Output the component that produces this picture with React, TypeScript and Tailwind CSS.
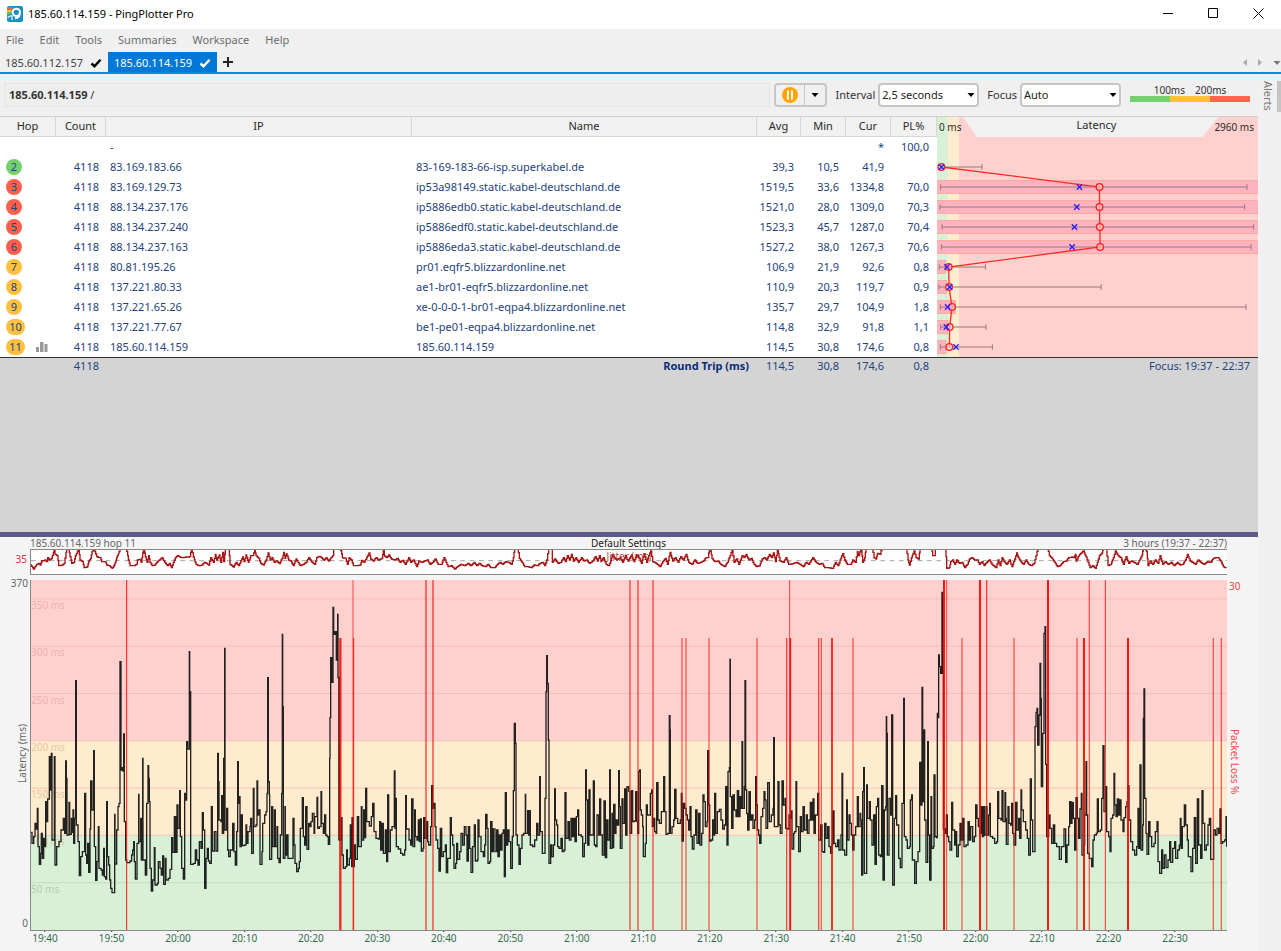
import { ReactNode } from 'react';

interface Hop {
  hop?: number;
  level?: 'good' | 'warn' | 'bad';
  count?: string;
  ip: string;
  name?: string;
  avg?: string;
  min?: string;
  cur: string;
  loss?: string;
}

const HOPS: Hop[] = [
  { ip: '-', cur: '*', loss: '100,0' },
  { hop: 2, level: 'good', count: '4118', ip: '83.169.183.66', name: '83-169-183-66-isp.superkabel.de', avg: '39,3', min: '10,5', cur: '41,9' },
  { hop: 3, level: 'bad', count: '4118', ip: '83.169.129.73', name: 'ip53a98149.static.kabel-deutschland.de', avg: '1519,5', min: '33,6', cur: '1334,8', loss: '70,0' },
  { hop: 4, level: 'bad', count: '4118', ip: '88.134.237.176', name: 'ip5886edb0.static.kabel-deutschland.de', avg: '1521,0', min: '28,0', cur: '1309,0', loss: '70,3' },
  { hop: 5, level: 'bad', count: '4118', ip: '88.134.237.240', name: 'ip5886edf0.static.kabel-deutschland.de', avg: '1523,3', min: '45,7', cur: '1287,0', loss: '70,4' },
  { hop: 6, level: 'bad', count: '4118', ip: '88.134.237.163', name: 'ip5886eda3.static.kabel-deutschland.de', avg: '1527,2', min: '38,0', cur: '1267,3', loss: '70,6' },
  { hop: 7, level: 'warn', count: '4118', ip: '80.81.195.26', name: 'pr01.eqfr5.blizzardonline.net', avg: '106,9', min: '21,9', cur: '92,6', loss: '0,8' },
  { hop: 8, level: 'warn', count: '4118', ip: '137.221.80.33', name: 'ae1-br01-eqfr5.blizzardonline.net', avg: '110,9', min: '20,3', cur: '119,7', loss: '0,9' },
  { hop: 9, level: 'warn', count: '4118', ip: '137.221.65.26', name: 'xe-0-0-0-1-br01-eqpa4.blizzardonline.net', avg: '135,7', min: '29,7', cur: '104,9', loss: '1,8' },
  { hop: 10, level: 'warn', count: '4118', ip: '137.221.77.67', name: 'be1-pe01-eqpa4.blizzardonline.net', avg: '114,8', min: '32,9', cur: '91,8', loss: '1,1' },
  { hop: 11, level: 'warn', count: '4118', ip: '185.60.114.159', name: '185.60.114.159', avg: '114,5', min: '30,8', cur: '174,6', loss: '0,8' },
];

const levelColor = {
  good: 'bg-[#74cf6e]',
  warn: 'bg-[#ffc040]',
  bad: 'bg-[#ff5f4c]',
};

// min, max, average, current and loss bar end, one entry per hop
const HOP_MARKS = [
  { min: 34, max: 156, avg: 34, cur: 34, loss: 0 },
  { min: 32, max: 950, avg: 508, cur: 448, loss: 990 },
  { min: 30, max: 943, avg: 508, cur: 440, loss: 990 },
  { min: 36, max: 970, avg: 509, cur: 433, loss: 990 },
  { min: 34, max: 962, avg: 510, cur: 426, loss: 990 },
  { min: 28, max: 166, avg: 56, cur: 51, loss: 46 },
  { min: 27, max: 513, avg: 57, cur: 59, loss: 49 },
  { min: 31, max: 947, avg: 66, cur: 53, loss: 77 },
  { min: 32, max: 168, avg: 59, cur: 49, loss: 53 },
  { min: 31, max: 187, avg: 58, cur: 78, loss: 48 },
];

// Samples are "x y" pairs in thirds of a pixel; each part is moved by its own offset
const LATENCY = [
  {
    offset: 0,
    data: '93 922,96 955,101 935,105 895,108 912,112 850,114 965,118 1018,122 985,124 925,127 1000,131 940,134 965,137 830,140 890,143 822,148 695,151 795,154 685,156 945,163 695,165 1020,170 965,177 950,183 915,190 880,194 925,197 708,199 760,201 930,207 832,209 928,214 880,216 922,219 855,221 955,224 880,227 467,229 900,234 950,238 1052,242 995,247 980,254 805,257 990,260 1015,263 955,266 1042,270 912,272 768,276 855,281 677,283 965,287 1066,291 1010,295 905,297 1030,303 1035,307 1050,311 970,313 1055,317 1062,320 830,322 995,326 1020,329 1065,332 1090,336 1103,341 1103,344 868,345 1017,350 915,354 845,357 835,360 410,363 735,366 728,369 738,371 627,373 890,377 1005,380 1013,390 1008,395 990,398 975,401 950,403 1010,406 1062,411 955,416 808,417 950,422 880,424 1005,428 700,429 1005,436 1050,440 835,444 722,446 760,448 830,450 1030,454 1098,458 1065,463 968,465 1080,472 1075,475 1010,480 1030,484 1050,488 993,491 1078,496 1000,498 1065,505 1060,510 1033,515 938,518 982,523 875,527 982,531 840,534 910,539 797,541 935,545 1030,550 1062,554 805,557 825,560 650,563 672,568 380,569 520,571 500,572 1018,580 1015,586 975,590 1005,594 1020,598 950,603 970,607 863,610 915,614 1090,618 1000,622 970,625 1008,629 1015,634 845,637 978,643 920,648 978,653 685,655 770,657 885,663 890,665 812,667 925,671 700,674 370,675 915,680 850,683 975,686 995,691 975,698 895,702 980,706 1020,710 920,713 710,715 835,718 815,720 965,724 870,727 962,733 960,738 900,740 955,744 920,750 905,752 880,755 985,760 790,762 905,768 900,771 768,773 870,777 855,780 1018,786 980,788 895,794 870,798 860,801 805,803 458,805 770,808 810,809 1003,815 845,818 965,823 855,826 965,831 905,833 1000,837 1013,841 930,845 805,847 328,848 545,850 1000,855 845,856 990,860 930,864 1000,872 1000,879 880,882 960,885 1015,890 1040,895 1030,898 1010,901 910,907 818,910 935,914 960,917 845,921 973,926 895,930 905,933 890,937 865,942 925,944 875,951 817,953 910,958 905,963 800,965 895,970 925,974 870,977 930,981 935,985 958,989 700,990 578,992 398,996 472,999 247,1001 328,1005 320,1009 405,1013 268,1014 458,1018 945',
  },
  {
    offset: 960,
    data: '55 458,57 945,63 878,66 990,70 1030,76 1025,80 975,82 1020,88 1000,91 900,95 1025,96 878,99 1025,103 960,106 1003,112 875,116 965,124 845,126 945,131 855,135 938,137 790,140 890,148 903,154 875,158 835,162 920,168 940,175 942,179 890,182 975,186 895,190 985,196 915,200 1010,203 810,206 980,211 915,216 905,223 738,225 910,227 820,229 965,235 972,242 985,248 990,254 975,257 812,259 912,267 945,272 960,275 822,279 965,284 855,286 935,291 945,295 885,298 950,301 882,304 978,309 970,311 878,315 940,320 890,323 950,326 960,332 905,335 782,338 850,342 835,345 905,348 945,353 970,357 1038,361 910,365 995,370 980,376 960,379 1043,383 1000,391 878,394 930,398 960,402 1030,407 1015,410 955,413 1003,419 980,423 925,428 960,433 905,438 930,441 1008,445 905,449 970,453 1042,458 965,463 900,466 1008,472 1005,474 885,477 935,483 980,490 995,494 960,497 868,501 910,504 1015,509 1010,512 890,516 980,520 912,525 980,530 915,534 995,538 930,542 975,546 925,550 915,553 1055,556 803,559 960,563 915,567 950,572 1030,577 935,580 797,583 595,586 655,588 930,592 960,597 1018,601 970,606 930,611 925,616 808,617 925,623 857,626 930,629 857,631 960,638 965,644 945,650 895,654 930,659 755,661 920,667 985,672 985,675 820,678 500,680 392,682 475,685 645,687 1015,692 960,695 995,700 960,704 792,706 885,710 900,713 965,717 970,723 940,727 980,732 975,735 803,738 940,744 890,748 945,753 880,757 935,761 880,765 950,769 875,773 855,776 930,784 935,788 995,793 955,797 735,799 825,803 960,807 795,810 930,816 930,820 768,823 960,827 965,831 870,836 930,839 822,842 930,847 990,852 828,856 998,860 885,864 945,869 735,871 970,876 865,878 968,881 838,885 925,888 885,892 900,896 737,898 845,901 970,906 822,909 895,914 792,917 930,921 785,926 800',
  },
  {
    offset: 1860,
    data: '26 800,27 800,30 925,35 797,38 890,43 888,47 800,51 890,53 925,56 740,59 735,61 855,64 870,68 905,70 995,76 955,79 840,82 870,88 870,91 805,95 795,97 905,101 880,104 920,108 925,110 773,114 885,118 895,124 860,131 755,134 860,138 928,143 925,146 925,148 572,150 615,151 925,156 905,161 885,164 793,168 880,173 895,181 885,184 805,186 948,190 835,194 850,198 870,202 885,206 915,210 845,213 935,217 972,222 930,227 855,231 955,236 865,240 960,245 925,249 810,252 830,256 905,261 890,263 677,266 840,269 948,273 945,278 885,281 930,284 805,287 925,292 860,298 853,303 885,308 912,313 900,317 785,321 960,324 740,328 728,330 403,331 815,335 910,339 810,343 855,348 875,352 797,356 875,360 815,363 850,366 650,368 850,373 785,375 467,377 795,380 865,383 915,387 800,391 885,395 870,399 910,404 885,407 755,409 840,412 915,416 930,419 955,423 875,428 850,432 800,435 825,438 910,443 773,448 890,454 870,459 850,461 638,463 905,470 905,474 770,477 900,481 925,486 768,490 840,495 820,497 910,503 912,507 870,511 880,514 858,516 972,521 925,524 920,528 770,530 905,536 980,541 875,544 920,549 845,553 915,559 870,562 925,567 885,571 832,575 885,579 822,582 925,586 870,593 805,596 945,602 900,606 980,611 982,614 895,618 940,623 905,627 965,632 985,636 960,638 858,642 955,647 965,653 945,657 975,663 930,666 745,668 975,674 990,680 825,682 945,687 870,690 895,694 930,698 975,702 930,707 905,712 815,715 905,720 865,722 885,725 1050,728 800,731 728,733 1045,740 780,742 880,748 830,751 885,756 960,761 870,765 1018,769 845,773 820,776 990,781 995,785 782,789 1065,793 855,797 845,799 575,800 625,802 990,807 820,812 870,815 570,818 1080,823 880,827 812,830 900,836 1000,841 1028,846 835,851 520,853 935,858 945,862 970,868 965,871 825,875 810,877 1005,884 1075,889 1010,894 980,899 712,902 840,906 487,908 830,911 615,914 885,918 1012,923 650,925 930,929 1065,933 815,935 970,940 965,942 750,945 935,950 935',
  },
  {
    offset: 2760,
    data: '45 935,50 938,52 565,54 578,56 390,58 425,62 445,66 202,68 440,70 912,76 925,79 870,82 935,86 950,90 975,95 832,98 915,104 960,107 920,110 995,115 960,120 895,124 945,128 880,132 965,138 960,144 890,148 945,152 905,158 950,163 935,167 840,171 880,175 905,180 925,184 845,187 935,191 845,193 930,198 845,201 930,206 870,209 835,211 935,218 940,224 955,230 950,233 800,236 880,243 885,246 797,249 890,255 803,257 880,259 958,264 845,267 895,272 900,275 835,278 925,282 960,287 832,291 915,296 880,299 940,303 795,305 855,310 890,317 915,322 940,326 990,331 762,334 885,338 980,343 980,345 605,348 562,351 550,353 660,357 570,360 415,362 520,364 785,368 625,372 325,375 305,377 718,380 935,386 870,390 910,395 955,400 900,404 955,410 965,418 1003,424 965,432 912,437 1012,441 960,446 905,449 830,453 895,456 832,460 880,464 975,468 818,472 880,476 940,480 852,484 805,486 990,491 960,494 870,498 710,500 870,503 985,508 1000,515 1025,519 945,523 930,529 925,532 822,535 920,541 915,545 820,549 662,552 860,557 785,560 920,566 935,570 980,573 880,578 870,582 745,584 840,588 875,592 822,596 870,600 825,603 885,609 920,612 878,617 845,621 830,624 782,627 885,632 950,638 975,644 990,650 965,654 850,656 970,660 720,663 975,668 900,670 580,672 492,674 820,678 925,681 988,686 890,690 935,695 965,702 955,706 920,711 890,714 1010,719 1045,725 975,728 1030,733 990,738 1028,744 1005,749 950,752 1012,758 970,764 950,767 1000,773 975,778 960,781 880,783 970,787 905,793 840,797 900,802 945,805 995,813 1040,818 970,823 878,827 1015,832 822,836 960,842 1000,846 797,849 895,854 975,859 960,864 900,868 880,872 1003,877 1003,881 915,886 930,891 910,896 925,900 852,903 955,908 950,914 945,918 875,920 965',
  },
];

const JITTER = [
  {
    offset: 0,
    data: '93 120,100 132,110 118,118 115,120 120,125 108,135 105,140 110,143 98,148 105,155 100,162 75,165 88,172 92,176 122,186 120,192 115,198 82,200 70,205 70,210 95,215 115,222 112,226 92,232 80,236 72,240 105,248 110,252 128,262 125,266 108,272 100,276 80,282 72,290 95,300 98,305 110,315 110,320 120,328 122,336 130,343 120,350 98,357 80,360 66,378 66,385 105,390 122,402 122,410 118,412 105,420 103,424 112,428 84,432 72,436 96,441 112,446 92,450 112,456 122,464 120,470 112,478 105,486 98,494 112,502 122,508 115,514 128,520 112,526 98,532 92,545 98,560 96,570 95,574 70,580 96,588 118,596 122,606 120,612 112,620 115,626 120,632 98,640 112,646 88,650 105,658 90,662 112,668 82,671 110,676 66,686 66,690 118,700 126,708 112,716 122,722 108,728 96,732 110,738 90,745 112,752 92,758 92,764 76,768 92,776 100,782 115,790 120,798 105,804 84,810 105,816 98,822 112,830 108,838 116,846 100,851 82,855 100,859 86,866 105,872 108,880 122,888 102,894 112,900 122,910 118,918 112,926 98,936 112,944 118,950 98,958 94,964 98,972 105,978 98,986 108,993 98,998 92,1001 66,1020 66,1027 98,1036 100',
  },
  {
    offset: 960,
    data: '76 100,82 118,87 98,94 105,100 122,112 122,120 120,125 106,132 112,140 98,147 84,152 102,160 108,168 98,176 105,185 100,190 76,193 92,200 98,206 90,214 102,222 105,232 100,240 112,248 106,256 118,266 98,272 112,280 105,290 125,296 108,305 112,314 108,322 105,330 118,338 112,346 102,354 118,364 118,372 98,378 112,384 125,394 122,404 132,412 125,422 118,434 122,444 115,452 122,462 112,470 122,478 115,486 122,496 125,504 118,512 128,524 128,532 118,540 112,548 118,556 110,566 112,574 118,580 98,584 66,592 66,598 100,606 112,614 125,624 125,634 128,642 120,652 122,660 115,668 112,674 122,680 105,686 66,694 66,697 112,704 102,714 115,722 112,730 98,736 110,742 92,748 105,754 88,760 108,768 98,775 112,784 98,792 108,800 105,808 115,818 108,826 95,832 108,838 92,843 110,850 98,858 118,866 122,872 108,876 90,890 105,900 98',
  },
  {
    offset: 1860,
    data: '0 98,8 112,16 92,24 108,34 90,42 110,50 90,58 100,64 115,72 86,80 112,86 92,92 78,98 110,104 112,112 118,120 125,128 110,136 100,142 118,150 82,158 108,166 98,174 112,182 95,190 105,198 88,206 112,216 118,224 105,232 115,242 112,250 108,258 98,264 98,268 70,272 78,276 100,284 110,294 108,302 118,314 125,322 112,330 92,336 74,342 112,350 102,356 118,366 92,372 98,378 88,386 105,394 100,402 118,410 125,418 122,426 102,434 98,440 105,448 88,454 98,460 84,466 110,472 74,480 108,490 112,498 98,506 118,518 116,530 112,540 118,550 125,558 112,566 118,578 98,588 112,598 118,606 115,614 128,626 128,638 130,646 112,654 122,660 105,668 86,674 105,682 118,692 118,698 105,706 112,712 80,716 92,722 70,724 74,728 112,734 98,738 66,756 66,762 98,768 102,772 85,780 88,786 66,858 66,864 105,868 120,874 98,882 78,888 98,896 102,900 66,933 66,938 92,944 92,946 60',
  },
  {
    offset: 2760,
    data: '46 60,76 60,80 130,88 128,92 110,98 105,104 118,110 105,118 115,126 112,134 128,142 118,148 102,156 98,164 105,172 105,178 118,186 110,192 122,200 112,208 105,216 118,228 128,234 105,240 122,246 98,252 110,260 118,268 105,276 125,284 102,290 84,294 96,302 110,310 118,318 105,326 118,334 122,342 115,348 92,354 66,382 66,388 92,396 100,404 112,412 125,420 122,430 110,438 108,446 98,456 96,462 98,466 88,468 108,474 95,482 85,490 78,498 96,504 112,510 128,518 122,526 130,532 112,538 92,546 84,550 66,558 66,564 122,572 118,580 98,586 78,594 92,602 98,610 118,618 95,626 115,634 108,642 112,652 118,660 102,666 90,670 66,680 80,684 122,690 108,698 118,706 105,714 115,720 92,728 118,736 110,744 118,754 112,762 122,772 112,780 120,788 118,796 105,802 88,810 108,818 112,826 118,834 105,842 112,852 118,862 110,872 112,880 100,888 98,894 98,902 108,910 125,918 130',
  },
];

// [x, top, width, opacity]
const LOSS_LINES: [number, number, number, number][] = [
  [380, 165, 3, 0.9],
  [1021, 339, 7, 0.85],
  [1059, 165, 4, 0.5],
  [1061, 339, 3, 0.9],
  [1278, 165, 5, 0.6],
  [1299, 165, 5, 0.6],
  [1890, 165, 4, 0.7],
  [1914, 165, 4, 0.7],
  [1959, 165, 4, 0.7],
  [2046, 339, 4, 0.6],
  [2058, 339, 4, 0.6],
  [2127, 339, 4, 0.6],
  [2271, 339, 4, 0.6],
  [2360, 339, 4, 0.7],
  [2369, 165, 3, 0.7],
  [2371, 339, 5, 0.9],
  [2456, 339, 4, 0.7],
  [2464, 339, 4, 0.6],
  [2496, 339, 5, 0.95],
  [2559, 339, 4, 0.6],
  [2832, 165, 6, 0.9],
  [2840, 165, 3, 0.7],
  [2886, 339, 4, 0.6],
  [2940, 165, 6, 0.9],
  [2960, 165, 4, 0.7],
  [3042, 339, 4, 0.6],
  [3144, 165, 6, 0.9],
  [3231, 339, 4, 0.6],
  [3252, 339, 6, 0.9],
  [3268, 165, 4, 0.6],
  [3316, 165, 3, 0.8],
  [3384, 339, 6, 0.9],
  [3640, 339, 4, 0.6],
  [3664, 339, 4, 0.6],
];

const TIMES = ['19:40', '19:50', '20:00', '20:10', '20:20', '20:30', '20:40', '20:50', '21:00', '21:10', '21:20', '21:30', '21:40', '21:50', '22:00', '22:10', '22:20', '22:30'];
const GRID = [350, 300, 250, 200, 150, 100, 50];
const MENU = ['File', 'Edit', 'Tools', 'Summaries', 'Workspace', 'Help'];

function parsePoints(part: { offset: number; data: string }) {
  return part.data.split(',').map((pair) => {
    const [x, y] = pair.split(' ').map(Number);
    return [x + part.offset, y];
  });
}

function stepPath(points: number[][]) {
  return points.map(([x, y], i) => (i === 0 ? `M${x} ${y}` : `H${x}V${y}`)).join('');
}

// Breaks long slopes into one-pixel steps
function fineSteps(points: number[][]) {
  return points.flatMap(([x, y], i) => {
    if (i === 0) return [[x, y]];
    const [px, py] = points[i - 1];
    const n = Math.ceil((x - px) / 3);
    return Array.from({ length: n }, (_, k) => [
      Math.round(px + ((x - px) * (k + 1)) / n),
      Math.round(py + ((y - py) * (k + 1)) / n),
    ]);
  });
}

function Logo() {
  return (
    <svg className="h-4 w-4" viewBox="0 0 48 48">
      <rect width="48" height="48" rx="6" fill="#1590c4" />
      <path d="M0 8Q2 3 9 4H19L15 12H0Z" fill="#f0653a" />
      <path d="M0 12H14V19H0Z" fill="#f7c325" />
      <path d="M0 19H13V25Q5 24 0 29Z" fill="#62bd5c" />
      <circle cx="28" cy="19" r="11" fill="#1590c4" stroke="#fff" strokeWidth="6" />
      <path d="M38 22Q39 36 24 37" fill="none" stroke="#fff" strokeWidth="6" />
      <path d="M2 36Q7 28 15 30V43" fill="none" stroke="#d8eef8" strokeWidth="4" />
    </svg>
  );
}

function Check() {
  return (
    <svg className="h-3 w-3" viewBox="0 0 12 12" fill="none" stroke="currentColor" strokeWidth="2.4">
      <path d="M1.5 6.5L4.5 9.2L10.5 2.8" />
    </svg>
  );
}

function Caret() {
  return (
    <svg className="h-1 w-2" viewBox="0 0 8 4" fill="currentColor">
      <path d="M0.500 0H7.500L4 4Z" />
    </svg>
  );
}

function TitleBar() {
  return (
    <header className="flex h-[29px] items-center bg-white pb-[2px] pl-[7px]">
      <Logo />
      <h1 className="ml-[5px] flex-1 text-[11px] leading-4 text-black">185.60.114.159 - PingPlotter Pro</h1>
      <button aria-label="Minimize" className="flex h-full w-[46px] items-center justify-center">
        <svg className="h-[11px] w-[11px]" viewBox="0 0 11 11" stroke="#000" fill="none"><path d="M0 5.5H10" /></svg>
      </button>
      <button aria-label="Maximize" className="flex h-full w-[45px] items-center justify-center">
        <svg className="h-[11px] w-[11px]" viewBox="0 0 11 11" stroke="#000" fill="none"><path d="M.5 .5H9.5V9.5H.5Z" /></svg>
      </button>
      <button aria-label="Close" className="flex h-full w-[45px] items-center justify-center">
        <svg className="h-[11px] w-[11px]" viewBox="0 0 11 11" stroke="#000" fill="none"><path d="M.5 .5L10.5 10.5M10.5 .5L.5 10.5" /></svg>
      </button>
    </header>
  );
}

function Tabs() {
  return (
    <div className="flex h-[22px] items-stretch border-b-2 border-[#0a8bdc] text-[11px] text-[#444]">
      <button className="flex w-[108px] items-center gap-[7px] pt-[2px] pl-[5px]">
        185.60.112.157
        <span className="text-black"><Check /></span>
      </button>
      <button className="flex w-[109px] items-center gap-[7px] bg-[#0078d7] pt-[2px] pl-[6px] text-white">
        185.60.114.159
        <Check />
      </button>
      <button aria-label="New tab" className="flex w-[22px] items-center justify-center">
        <svg className="h-[10px] w-[10px]" viewBox="0 0 10 10" stroke="#222" strokeWidth="2"><path d="M0 5H10M5 0V10" /></svg>
      </button>
      <div className="ml-auto flex items-center gap-[11px] text-[#aaa]">
        <svg className="h-[7px] w-1" viewBox="0 0 4 7" fill="currentColor"><path d="M4 0V7L0 3.5Z" /></svg>
        <svg className="h-[7px] w-1" viewBox="0 0 4 7" fill="currentColor"><path d="M0 0V7L4 3.5Z" /></svg>
        <span className="pt-[2px] text-[#777]"><Caret /></span>
      </div>
    </div>
  );
}

function Picker({ id, label, value }: { id: string; label: string; value: string }) {
  return (
    <div className="flex items-center gap-[3px]">
      <label htmlFor={id}>{label}</label>
      <div className="relative">
        <select id={id} defaultValue={value} className="h-6 w-[101px] appearance-none rounded-sm border-2 border-[#c6c6c6] bg-white pl-[2px] text-[11px] text-[#222]">
          <option>{value}</option>
        </select>
        <span className="pointer-events-none absolute top-[10px] right-1 text-black"><Caret /></span>
      </div>
    </div>
  );
}

function Toolbar() {
  return (
    <div className="flex h-[42px] items-center pr-2 pl-1 text-[11px] text-[#333]">
      <div className="flex h-6 flex-1 items-center border border-[#e4e4e4] bg-[#eeeeee] pl-1 leading-4">
        <b>185.60.114.159</b>&nbsp;/
      </div>
      <div className="ml-1 flex h-6 w-[53px] rounded-sm border-2 border-[#c6c6c6]">
        <button aria-label="Pause" className="flex flex-1 items-center justify-center border-r border-[#c6c6c6]">
          <svg className="h-4 w-4" viewBox="0 0 16 16">
            <circle cx="8" cy="8" r="8" fill="#ffa500" />
            <path d="M6 4V12M10 4V12" stroke="#fff" strokeWidth="1.8" strokeLinecap="round" />
          </svg>
        </button>
        <button aria-label="Pause options" className="flex w-5 items-center justify-center text-black"><Caret /></button>
      </div>
      <div className="ml-2 flex gap-2">
        <Picker id="interval" label="Interval" value="2,5 seconds" />
        <Picker id="focus" label="Focus" value="Auto" />
      </div>
      <div className="mb-1 ml-[9px] w-[120px] text-[10px] leading-3">
        <div className="flex justify-center gap-[10px]">
          <span>100ms</span>
          <span>200ms</span>
        </div>
        <div className="flex h-[6px]">
          <div className="flex-1 bg-[#74cf6e]" />
          <div className="flex-1 bg-[#ffc040]" />
          <div className="flex-1 bg-[#ff6650]" />
        </div>
      </div>
    </div>
  );
}

function HopGraph() {
  const rowY = (i: number) => 171 + 60 * i;
  return (
    <svg className="block h-[220px] w-full" viewBox="21 81 962 660" preserveAspectRatio="none" fill="none">
      <rect x="21" y="81" width="962" height="660" fill="#ffd1ce" />
      <rect x="21" y="81" width="32" height="660" fill="#d8f0d6" />
      <rect x="53" y="81" width="34" height="660" fill="#ffebcd" />
      {HOP_MARKS.map((m, i) => (
        <g key={i}>
          {m.loss > 0 && <rect x="15" y={rowY(i) - 20} width={m.loss - 15} height="40" fill="#ffb3c0" stroke="#ff9f84" strokeWidth="2" />}
          <path d={`M${m.min} ${rowY(i)}H${m.max}M${m.min} ${rowY(i) - 8}v16M${m.max} ${rowY(i) - 8}v16`} stroke="#967a7a" strokeWidth="3" />
        </g>
      ))}
      <polyline points={HOP_MARKS.map((m, i) => `${m.avg},${rowY(i)}`).join(' ')} stroke="#ff2a2a" strokeWidth="4" />
      {HOP_MARKS.map((m, i) => (
        <g key={i} strokeWidth="4">
          <circle cx={m.avg} cy={rowY(i)} r="10" stroke="#ff2020" fill="#ffc8c8" fillOpacity=".7" />
          <path d={`M${m.cur - 8} ${rowY(i) - 8}l16 16m0 -16l-16 16`} stroke="#2a1cff" />
        </g>
      ))}
    </svg>
  );
}

function HeadCell({ children }: { children: ReactNode }) {
  return <th className="h-5 border-r border-b border-[#d6d6d6] bg-[#f1f1f1] p-0 pb-[2px] text-center font-normal">{children}</th>;
}

function HopTable() {
  return (
    <table className="w-full table-fixed border-separate border-spacing-0 border-t border-[#d0d0d0] text-[11px] leading-4 text-[#24427c]">
      <colgroup>
        <col className="w-[56px]" />
        <col className="w-[50px]" />
        <col className="w-[306px]" />
        <col />
        <col className="w-[44px]" />
        <col className="w-[45px]" />
        <col className="w-[45px]" />
        <col className="w-[46px]" />
        <col className="w-[321px]" />
      </colgroup>
      <thead className="text-[#2a2a2a]">
        <tr>
          <HeadCell>Hop</HeadCell>
          <HeadCell>Count</HeadCell>
          <HeadCell>IP</HeadCell>
          <HeadCell>Name</HeadCell>
          <HeadCell>Avg</HeadCell>
          <HeadCell>Min</HeadCell>
          <HeadCell>Cur</HeadCell>
          <HeadCell>PL%</HeadCell>
          <th className="relative p-0 font-normal">
            <svg className="absolute inset-0 h-full w-full" viewBox="0 0 960 60" preserveAspectRatio="none">
              <rect width="960" height="60" fill="#ffd1ce" />
              <rect width="32" height="60" fill="#d8f0d6" />
              <rect x="32" width="34" height="60" fill="#ffebcd" />
              <path d="M78 0H842L794 60H119Z" fill="#f1f1f1" />
            </svg>
            <div className="relative flex items-start justify-between pr-1 pb-[2px] pl-[2px]">
              <span className="w-12 pt-[2px] text-left text-[10px]">0 ms</span>
              <span>Latency</span>
              <span className="flex w-12 justify-end pt-[2px] text-[10px] whitespace-nowrap">2960 ms</span>
            </div>
          </th>
        </tr>
      </thead>
      <tbody className="bg-white">
        {HOPS.map((h, i) => (
          <tr key={i} className="h-5">
            <td className="p-0 pl-[6px]">
              {h.hop && h.level && (
                <div className="flex items-center gap-[11px]">
                  <span className={`rounded-full text-center ${h.hop > 9 ? 'w-[19px]' : 'w-4'} ${levelColor[h.level]}`}>{h.hop}</span>
                  {h.hop === 11 && (
                    <svg className="h-3 w-3" viewBox="0 0 12 12" fill="#999"><path d="M0 6H3V11H0ZM4 1H7.500V11H4ZM8.500 3H11.500V11H8.500Z" /></svg>
                  )}
                </div>
              )}
            </td>
            <td className="p-0 pr-[7px] text-right">{h.count}</td>
            <td className="p-0 pl-1">{h.ip}</td>
            <td className="p-0 pl-1">{h.name}</td>
            <td className="p-0 pr-[7px] text-right">{h.avg}</td>
            <td className="p-0 pr-[7px] text-right">{h.min}</td>
            <td className="p-0 pr-[7px] text-right">{h.cur}</td>
            <td className="p-0 pr-2 text-right">{h.loss}</td>
            {i === 0 && (
              <td rowSpan={HOPS.length} className="p-0">
                <HopGraph />
              </td>
            )}
          </tr>
        ))}
      </tbody>
      <tfoot>
        <tr className="bg-[#d4d4d4] [&>td]:border-t [&>td]:border-[#333]">
          <td />
          <td className="p-0 pr-[7px] text-right">4118</td>
          <td />
          <td className="p-0 pr-2 text-right font-bold text-[#0c2d74]">Round Trip (ms)</td>
          <td className="p-0 pr-[7px] text-right">114,5</td>
          <td className="p-0 pr-[7px] text-right">30,8</td>
          <td className="p-0 pr-[7px] text-right">174,6</td>
          <td className="p-0 pr-2 text-right">0,8</td>
          <td className="p-0 pr-2 text-right">Focus: 19:37 - 22:37</td>
        </tr>
      </tfoot>
    </table>
  );
}

function JitterPlot() {
  return (
    <div className="relative h-[26px] border-y border-l border-[#888] bg-[#fdfdfd]">
      <svg className="block h-full w-full" viewBox="93 75 3588 72" preserveAspectRatio="none" fill="none">
        <path d="M93 107H3681" stroke="#777" strokeWidth="2" strokeDasharray="14 14" />
        {JITTER.map((part) => (
          <path key={part.offset} d={stepPath(fineSteps(parsePoints(part)))} stroke="#a81515" strokeWidth="4" />
        ))}
      </svg>
      <span className="absolute inset-x-0 top-0 text-center text-[10px] leading-3 text-[#b02020]/80">Jitter (ms)</span>
    </div>
  );
}

function LatencyPlot() {
  return (
    <div className="relative h-[351px] border-b border-l border-[#888]">
      <svg className="absolute inset-0 h-full w-full" viewBox="93 165 3588 1050" preserveAspectRatio="none">
        <rect x="93" y="165" width="3588" height="482" fill="#ffd1ce" />
        <rect x="93" y="647" width="3588" height="284" fill="#ffebcd" />
        <rect x="93" y="931" width="3588" height="284" fill="#d8f0d6" />
        {GRID.map((ms) => (
          <path key={ms} d={`M93 ${1215 - ms * 2.838}h3588`} stroke={ms > 50 ? '#f5b5b0' : '#bcd4ba'} strokeWidth="3" strokeOpacity=".75" />
        ))}
      </svg>
      {GRID.map((ms) => (
        <span
          key={ms}
          className={`absolute left-0 text-[10px] leading-3 ${ms > 200 ? 'text-[#efb2ae]' : ms > 50 ? 'text-[#e6c9a4]' : 'text-[#b4ccb0]'}`}
          style={{ top: `${((370 - ms) / 370) * 100}%` }}
        >
          {ms} ms
        </span>
      ))}
      <svg className="absolute inset-0 h-full w-full" viewBox="93 165 3588 1050" preserveAspectRatio="none" fill="none">
        {LATENCY.map((part) => (
          <path key={part.offset} d={stepPath(parsePoints(part))} stroke="#0c0c0c" strokeOpacity=".9" strokeWidth="4" />
        ))}
        {LOSS_LINES.map(([x, top, width, opacity]) => (
          <path key={`${x}-${top}`} d={`M${x} ${top}V1215`} stroke="#ff0000" strokeWidth={width} strokeOpacity={opacity} />
        ))}
      </svg>
    </div>
  );
}

function TimeAxis() {
  return (
    <div className="relative h-5 text-[10px] leading-3 text-[#2f6f4f]">
      {TIMES.map((time, i) => (
        <div key={time} className="absolute top-0 flex -translate-x-1/2 flex-col items-center" style={{ left: `${((15 + 66.47 * i) / 1197) * 100}%` }}>
          <span className="h-px w-px bg-[#333]" />
          {time}
        </div>
      ))}
    </div>
  );
}

function TimeGraph() {
  return (
    <section className="grid grid-cols-[30px_1fr_31px] border-t-[5px] border-[#5d5a8c] bg-[#f4f4f4] text-[10px] leading-3 text-[#666]">
      <div />
      <div className="grid grid-cols-3">
        <span>185.60.114.159 hop 11</span>
        <span className="text-center text-[#222]">Default Settings</span>
        <span className="text-right">3 hours (19:37 - 22:37)</span>
      </div>
      <div />

      <div className="self-start pt-1 pr-[3px] text-right text-[#d04040]">35</div>
      <JitterPlot />
      <div />

      <div className="mt-[5px] flex flex-col items-end justify-between pr-[2px] pb-[2px]">
        <span className="-mt-[3px]">370</span>
        <span className="rotate-180 leading-3 [writing-mode:vertical-rl]">Latency (ms)</span>
        <span>0</span>
      </div>
      <div className="mt-[5px]">
        <LatencyPlot />
      </div>
      <div className="mt-[5px] flex flex-col items-start justify-between pl-[2px] text-[#f04848]">
        <span>30</span>
        <span className="[writing-mode:vertical-rl]">Packet Loss %</span>
        <span />
      </div>

      <div />
      <TimeAxis />
      <div />
    </section>
  );
}

export default function App() {
  return (
    <div className="flex min-h-screen flex-col bg-[#f0f0f0] font-['Noto_Sans','Open_Sans',sans-serif]">
      <TitleBar />
      <nav className="flex h-[23px] items-center gap-4 pl-[6px] text-[11px] text-[#6c6c6c]">
        {MENU.map((item) => (
          <button key={item}>{item}</button>
        ))}
      </nav>
      <Tabs />
      <div className="flex flex-1">
        <main className="flex min-w-0 flex-1 flex-col">
          <Toolbar />
          <HopTable />
          <div className="flex-1 bg-[#d4d4d4]" />
          <TimeGraph />
        </main>
        <aside className="flex w-[23px] items-start justify-between bg-[#f0f0f0] pt-[7px]">
          <button className="ml-[2px] text-[11px] leading-4 text-[#777] [writing-mode:vertical-rl]">Alerts</button>
          <span className="h-[31px] w-1 bg-[#c4c4c4]" />
        </aside>
      </div>
    </div>
  );
}
